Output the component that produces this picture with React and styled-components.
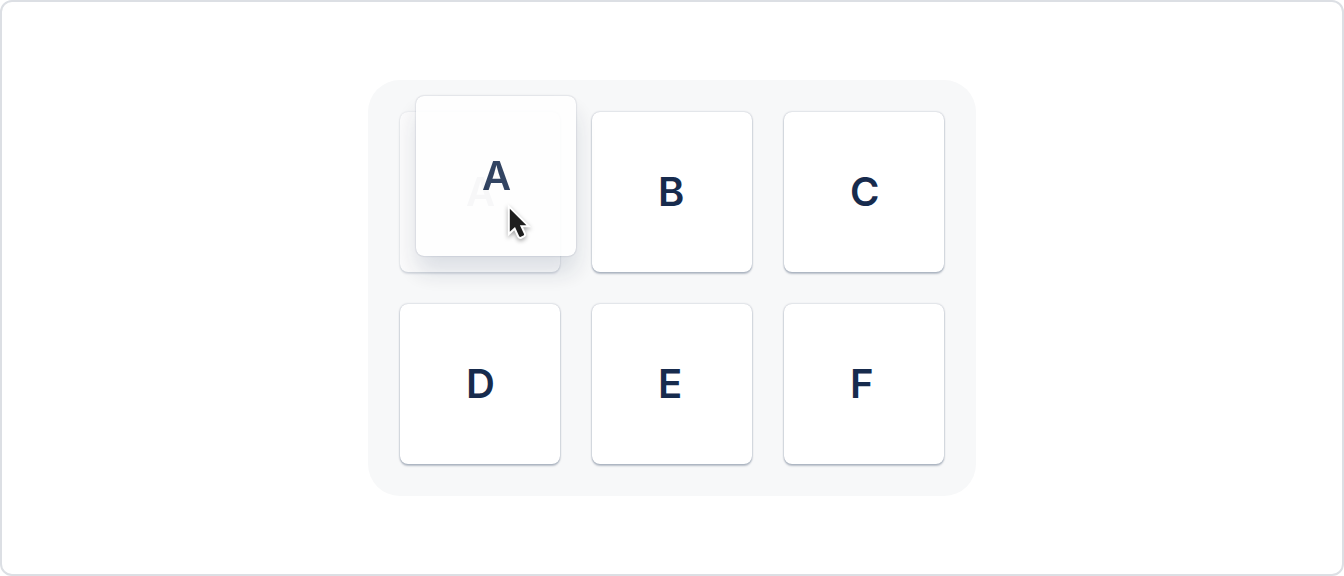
import React from "react";
import styled, { createGlobalStyle, css } from "styled-components";

const GlobalStyle = createGlobalStyle`
    * {
        box-sizing: border-box;
    }
    body {
        margin: 0;
        background: #fff;
        font-family: Inter, "Liberation Sans", sans-serif;
    }
`

const Frame = styled.main`
    display: flex;
    align-items: center;
    justify-content: center;
    min-height: 100vh;
    padding: 32px;
    border: 2px solid #dcdfe4;
    border-radius: 12px;
    background: #fff;
`

const Board = styled.div`
    display: grid;
    grid-template-columns: repeat(3, 160px);
    gap: 32px;
    padding: 32px;
    border-radius: 32px;
    background: #f7f8f9;
`

const Slot = styled.div`
    position: relative;
`

const Card = styled.div`
    display: flex;
    align-items: center;
    justify-content: center;
    width: 160px;
    height: 160px;
    border-radius: 8px;
    background: #fff;
    color: #172b4d;
    box-shadow: 0 2px 2px rgba(9, 30, 66, 0.25), 0 0 2px rgba(9, 30, 66, 0.31);

    ${props => props.$ghost && css`
        color: #8590a2;
        opacity: 0.5;
    `}

    ${props => props.$lifted && css`
        position: absolute;
        top: -16px;
        left: 16px;
        z-index: 1;
        opacity: 0.88;
        box-shadow: 0 16px 24px rgba(9, 30, 66, 0.15), 0 0 2px rgba(9, 30, 66, 0.31);
    `}
`

const Letter = styled.span`
    width: 28px;
    font-size: 40px;
    font-weight: 600;
    line-height: 48px;
`

const Cursor = styled.svg`
    position: absolute;
    top: 88px;
    left: 104px;
    z-index: 2;
    filter: drop-shadow(0 2px 2px rgba(0, 0, 0, 0.35));
`

const letters = ["A", "B", "C", "D", "E", "F"];

const Pointer = () => (
    <Cursor width="32" height="44" viewBox="0 0 32 44" aria-hidden="true">
        <path
            d="M5.8 8.8 L5.8 31.8 L11 26.9 L15.2 36.2 Q15.8 37.2 16.8 36.8 L19.4 35.6 Q20.4 35 20 34 L15.9 25.2 L22.4 25.2 Z"
            fill="#1f1f1f"
            stroke="#fff"
            strokeWidth="4"
            paintOrder="stroke"
        />
    </Cursor>
);

const LetterCard = ({ letter, ghost, lifted }) => (
    <Card $ghost={ghost} $lifted={lifted}>
        <Letter>{letter}</Letter>
    </Card>
);

const App = () => {
    const dragging = "A";

    return (
        <>
            <GlobalStyle />
            <Frame>
                <Board>
                    {letters.map(letter => (
                        <Slot key={letter}>
                            <LetterCard letter={letter} ghost={letter === dragging} />
                            {letter === dragging && (
                                <>
                                    <LetterCard letter={letter} lifted />
                                    <Pointer />
                                </>
                            )}
                        </Slot>
                    ))}
                </Board>
            </Frame>
        </>
    );
};

export default App;
